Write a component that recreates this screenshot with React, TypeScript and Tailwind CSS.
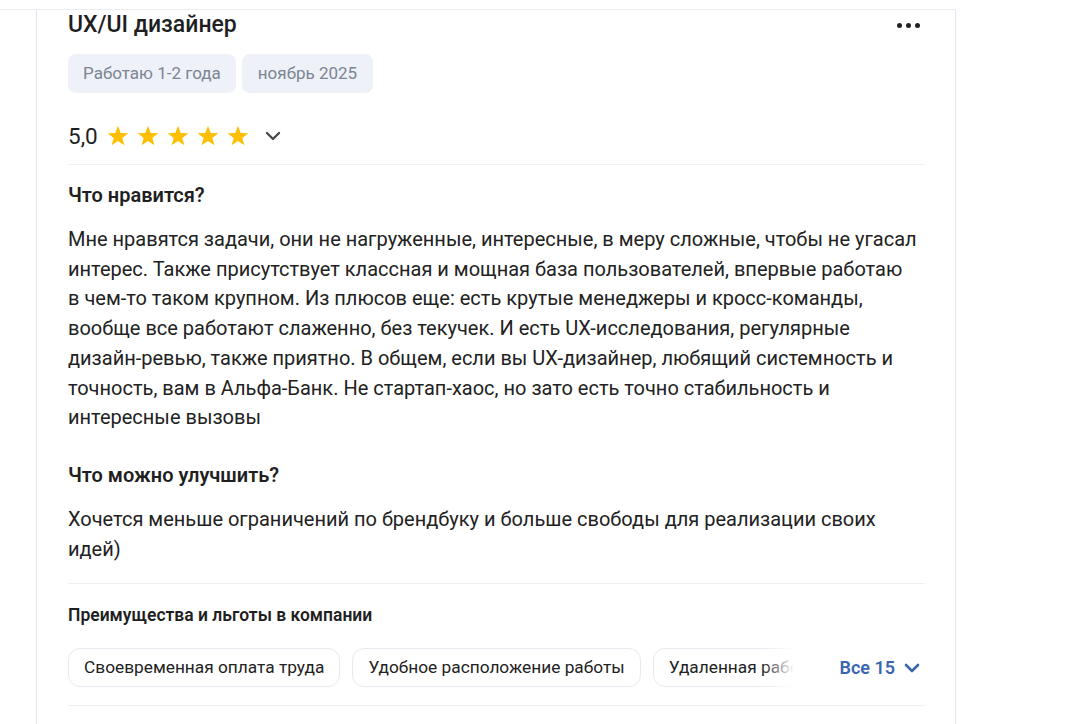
import React from 'react';
import { ChevronDown } from 'lucide-react';

const StarIcon: React.FC = () => (
  <svg width="24" height="24" viewBox="0 0 24 24">
    <polygon
      points="12,1.8 14.7,8.9 22.3,9.2 16.3,13.9 18.4,21.3 12,17 5.6,21.3 7.7,13.9 1.7,9.2 9.3,8.9"
      fill="#fdbf00"
    />
  </svg>
);

const benefits = [
  'Своевременная оплата труда',
  'Удобное расположение работы',
  'Удаленная работа',
  'Корпоративное обучение',
];

export default function App() {
  return (
    <div className="min-h-screen bg-white text-[#1f1f1f] font-['Roboto',sans-serif]">
      <div className="w-[956px] h-[10px] border-b border-[#e9ecf1]" />
      <div className="ml-[36px] w-[920px] min-h-[714px] border-l border-r border-[#e3e6ee] pl-[31px] pr-[30px]">
        {/* Title */}
        <div className="flex items-center justify-between h-[30px]">
          <h2 className="text-[23px] leading-[28px] font-medium">UX/UI дизайнер</h2>
          <div className="flex items-center gap-[4px] pr-[5px]">
            <span className="w-[5px] h-[5px] rounded-full bg-[#222]" />
            <span className="w-[5px] h-[5px] rounded-full bg-[#222]" />
            <span className="w-[5px] h-[5px] rounded-full bg-[#222]" />
          </div>
        </div>

        {/* Tags */}
        <div className="flex gap-[6px] mt-[14px]">
          <span className="h-[39px] flex items-center px-[15px] rounded-lg bg-[#eef1f7] text-[#7b8594] text-[17px]">
            Работаю 1-2 года
          </span>
          <span className="h-[39px] flex items-center px-[16px] rounded-lg bg-[#eef1f7] text-[#7b8594] text-[17px]">
            ноябрь 2025
          </span>
        </div>

        {/* Rating */}
        <div className="flex items-center h-[30px] mt-[28px]">
          <span className="text-[22.5px] leading-[28px] mr-[8px]">5,0</span>
          <div className="flex gap-[6px]">
            <StarIcon />
            <StarIcon />
            <StarIcon />
            <StarIcon />
            <StarIcon />
          </div>
          <ChevronDown className="ml-[11px] w-[24px] h-[24px] text-[#4a4a4a]" strokeWidth={2.4} />
        </div>

        <div className="mt-[13px] border-t border-[#eef0f4]" />

        {/* Pros */}
        <h3 className="mt-[18px] text-[20px] leading-[24px] font-semibold">Что нравится?</h3>
        <p className="mt-[18px] text-[20px] leading-[29.7px] text-[#222] whitespace-nowrap">
          Мне нравятся задачи, они не нагруженные, интересные, в меру сложные, чтобы не угасал
          <br />
          интерес. Также присутствует классная и мощная база пользователей, впервые работаю
          <br />
          в чем-то таком крупном. Из плюсов еще: есть крутые менеджеры и кросс-команды,
          <br />
          вообще все работают слаженно, без текучек. И есть UX-исследования, регулярные
          <br />
          дизайн-ревью, также приятно. В общем, если вы UX-дизайнер, любящий системность и
          <br />
          точность, вам в Альфа-Банк. Не стартап-хаос, но зато есть точно стабильность и
          <br />
          интересные вызовы
        </p>

        {/* Cons */}
        <h3 className="mt-[30px] text-[20px] leading-[24px] font-semibold">Что можно улучшить?</h3>
        <p className="mt-[18px] text-[20px] leading-[29.7px] text-[#222] whitespace-nowrap">
          Хочется меньше ограничений по брендбуку и больше свободы для реализации своих
          <br />
          идей)
        </p>

        <div className="mt-[19px] border-t border-[#eef0f4]" />

        {/* Benefits */}
        <h4 className="mt-[21px] text-[17.5px] leading-[20px] font-semibold">Преимущества и льготы в компании</h4>
        <div className="mt-[23px] flex items-center">
          <div className="relative w-[726px] overflow-hidden">
            <div className="flex gap-[12px]">
              {benefits.map((b) => (
                <span
                  key={b}
                  className="shrink-0 h-[39px] flex items-center px-[15px] rounded-xl border border-[#e7eaf0] text-[17.3px] text-[#222]"
                >
                  {b}
                </span>
              ))}
            </div>
            <div className="absolute right-0 top-0 h-full w-[32px] bg-gradient-to-r from-white/0 to-white" />
          </div>
          <button className="ml-auto flex items-center gap-[5px] text-[18px] font-semibold text-[#3a66ae] pr-[1px]">
            Все 15
            <ChevronDown className="w-[24px] h-[24px]" strokeWidth={2.6} />
          </button>
        </div>

        <div className="mt-[18px] border-t border-[#eef0f4]" />
      </div>
    </div>
  );
}
